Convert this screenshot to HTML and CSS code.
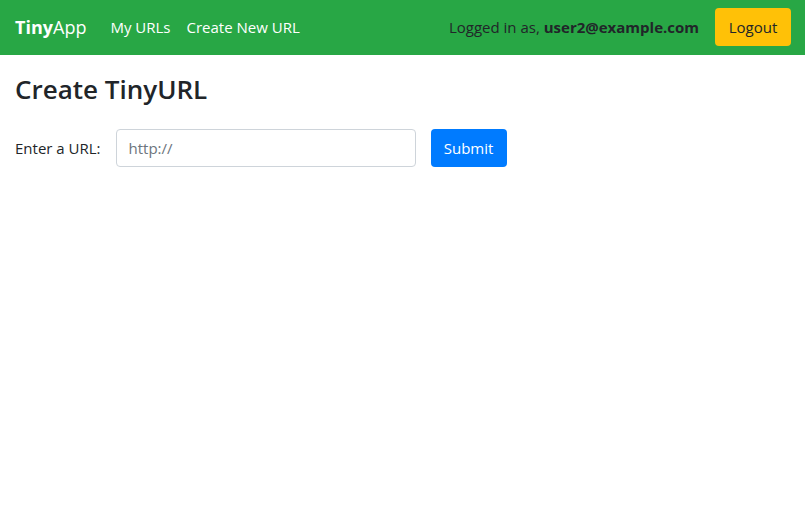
FILE: index.html
```html
<!DOCTYPE html>
<html lang="en">
<head>
  <meta charset="utf-8">
  <meta name="viewport" content="width=device-width, initial-scale=1">
  <title>TinyApp</title>
  <link rel="stylesheet" href="styles.css">
</head>
<body>
  <header class="navbar">
    <a class="brand" href="#"><strong>Tiny</strong>App</a>
    <nav class="nav">
      <a class="nav-link" href="#">My URLs</a>
      <a class="nav-link" href="#">Create New URL</a>
    </nav>
    <form class="session">
      <span>Logged in as, <strong>user2@example.com</strong></span>
      <button class="btn btn-warning" type="submit">Logout</button>
    </form>
  </header>
  <main class="content">
    <h1 class="title">Create TinyURL</h1>
    <form class="url-form">
      <label for="longURL">Enter a URL:</label>
      <input class="field" id="longURL" type="text" name="longURL" placeholder="http://">
      <button class="btn btn-primary" type="submit">Submit</button>
    </form>
  </main>
</body>
</html>
```
FILE: styles.css
```css
* {
  box-sizing: border-box;
}

body {
  margin: 0;
  font-family: "Segoe UI", "Open Sans", "Noto Sans", sans-serif;
  font-size: 15px;
  line-height: 24px;
  color: #212529;
  background: #fff;
}

.navbar {
  display: flex;
  align-items: center;
  padding: 8px 14px 9px 15px;
  background: #28a745;
}

.brand {
  margin-right: 16px;
  font-size: 18px;
  color: #fff;
  text-decoration: none;
}

.nav {
  display: flex;
}

.nav-link {
  padding: 0 8px;
  color: #fff;
  text-decoration: none;
}

.session {
  display: flex;
  align-items: center;
  gap: 16px;
  margin-left: auto;
}

.content {
  padding: 17px 15px;
}

.title {
  margin: 0 0 23px;
  font-size: 26px;
  font-weight: 600;
  line-height: 34px;
}

.url-form {
  display: flex;
  align-items: center;
  gap: 15px;
}

.field {
  width: 300px;
  height: 38px;
  padding: 6px 12px;
  border: 1px solid #ced4da;
  border-radius: 4px;
  font: inherit;
  color: #495057;
}

.field::placeholder {
  color: #6c757d;
  opacity: 1;
}

.btn {
  min-width: 76px;
  padding: 6px 12px;
  border: 1px solid transparent;
  border-radius: 4px;
  font: inherit;
  cursor: pointer;
}

.btn-warning {
  background: #ffc107;
  color: #212529;
}

.btn-primary {
  background: #007bff;
  color: #fff;
}
```
